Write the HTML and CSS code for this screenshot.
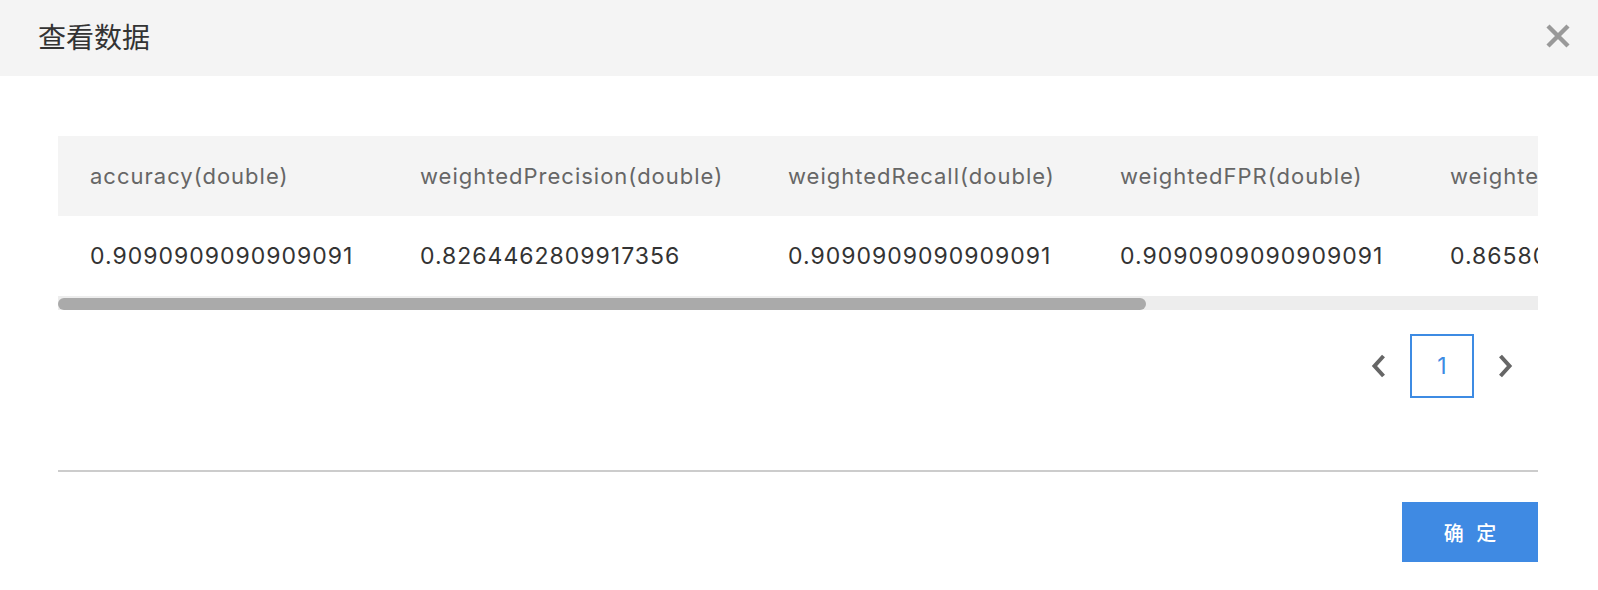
FILE: index.html
```html
<!DOCTYPE html>
<html lang="zh-CN">
<head>
<meta charset="utf-8">
<title>查看数据</title>
<link rel="stylesheet" href="styles.css">
</head>
<body>
<div class="dialog">
  <header class="dlg-head">
    <h2 class="dlg-title">查看数据</h2>
    <button class="dlg-close" aria-label="关闭">
      <svg width="24" height="24" viewBox="0 0 24 24"><path d="M2 2 L22 22 M22 2 L2 22" stroke="#999" stroke-width="4.4" fill="none"/></svg>
    </button>
  </header>
  <div class="dlg-body">
    <div class="table-wrap">
      <table class="data">
        <colgroup>
          <col class="c1"><col class="c2"><col class="c3"><col class="c4"><col class="c5"><col class="c6">
        </colgroup>
        <thead>
          <tr>
            <th>accuracy(double)</th>
            <th>weightedPrecision(double)</th>
            <th>weightedRecall(double)</th>
            <th>weightedFPR(double)</th>
            <th>weightedFMeasure(double)</th>
            <th>f1(double)</th>
          </tr>
        </thead>
        <tbody>
          <tr>
            <td>0.9090909090909091</td>
            <td>0.8264462809917356</td>
            <td>0.9090909090909091</td>
            <td>0.9090909090909091</td>
            <td>0.8658008658008658</td>
            <td>0.8658008658008658</td>
          </tr>
        </tbody>
      </table>
    </div>
    <div class="hscroll"><div class="hscroll-thumb" style="width: 73.5%"></div></div>
    <div class="pager">
      <button class="pg-arrow" aria-label="上一页">
        <svg width="16" height="24" viewBox="0 0 16 24"><polyline points="13.5,2 4.5,12 13.5,22" stroke="#666" stroke-width="4" fill="none"/></svg>
      </button>
      <span class="pg-num">1</span>
      <button class="pg-arrow" aria-label="下一页">
        <svg width="16" height="24" viewBox="0 0 16 24"><polyline points="2.5,2 11.5,12 2.5,22" stroke="#666" stroke-width="4" fill="none"/></svg>
      </button>
    </div>
  </div>
  <footer class="dlg-foot">
    <button class="btn-ok">确 定</button>
  </footer>
</div>
</body>
</html>
```
FILE: styles.css
```css
* { box-sizing: border-box; }
html, body { margin: 0; padding: 0; background: #fff; }
body {
  font-family: Inter, "Noto Sans CJK SC", sans-serif;
  color: #333;
}
button { font: inherit; border: 0; background: none; padding: 0; cursor: pointer; }

.dlg-head {
  height: 76px;
  background: #f4f4f4;
  display: flex;
  align-items: center;
  justify-content: space-between;
  padding: 0 28px 4px 38px;
}
.dlg-title {
  margin: 0;
  font-family: "Noto Sans CJK SC", sans-serif;
  font-size: 28px;
  font-weight: 400;
  color: #333;
  line-height: 1;
}
.dlg-close { width: 24px; height: 24px; display: flex; }

.dlg-body { padding: 60px 60px 0 58px; }

.table-wrap { overflow: hidden; }

.data {
  border-collapse: collapse;
  table-layout: fixed;
  width: 2013px;
}
.data .c1 { width: 330px; }
.data .c2 { width: 368px; }
.data .c3 { width: 332px; }
.data .c4 { width: 330px; }
.data .c5 { width: 365px; }
.data .c6 { width: 288px; }
.data th, .data td {
  height: 80px;
  padding: 0 0 0 32px;
  text-align: left;
  white-space: nowrap;
  overflow: hidden;
}
.data th {
  background: #f4f4f4;
  font-weight: 400;
  font-size: 22px;
  letter-spacing: 1px;
  color: #666;
}
.data td {
  font-size: 23px;
  letter-spacing: 1px;
  color: #333;
}

.hscroll {
  height: 14px;
  background: #ededed;
  padding-top: 2px;
}
.hscroll-thumb {
  height: 12px;
  background: #aaa;
  border-radius: 6px;
}

.pager {
  display: flex;
  justify-content: flex-end;
  margin-top: 24px;
}
.pg-arrow, .pg-num {
  width: 64px;
  height: 64px;
  display: flex;
  align-items: center;
  justify-content: center;
}
.pg-num {
  border: 2px solid #3d8be3;
  color: #3d8be3;
  font-size: 23px;
}

.dlg-foot {
  margin: 72px 60px 0 58px;
  border-top: 2px solid #cccccc;
  padding-top: 30px;
  display: flex;
  justify-content: flex-end;
}
.btn-ok {
  width: 136px;
  height: 60px;
  background: #3f8ae3;
  color: #fff;
  font-family: "Noto Sans CJK SC", sans-serif;
  font-size: 20px;
  font-weight: 500;
  letter-spacing: 4px;
  padding-left: 4px;
  box-shadow: 0 4px 0 #f2f2f2;
}
```
